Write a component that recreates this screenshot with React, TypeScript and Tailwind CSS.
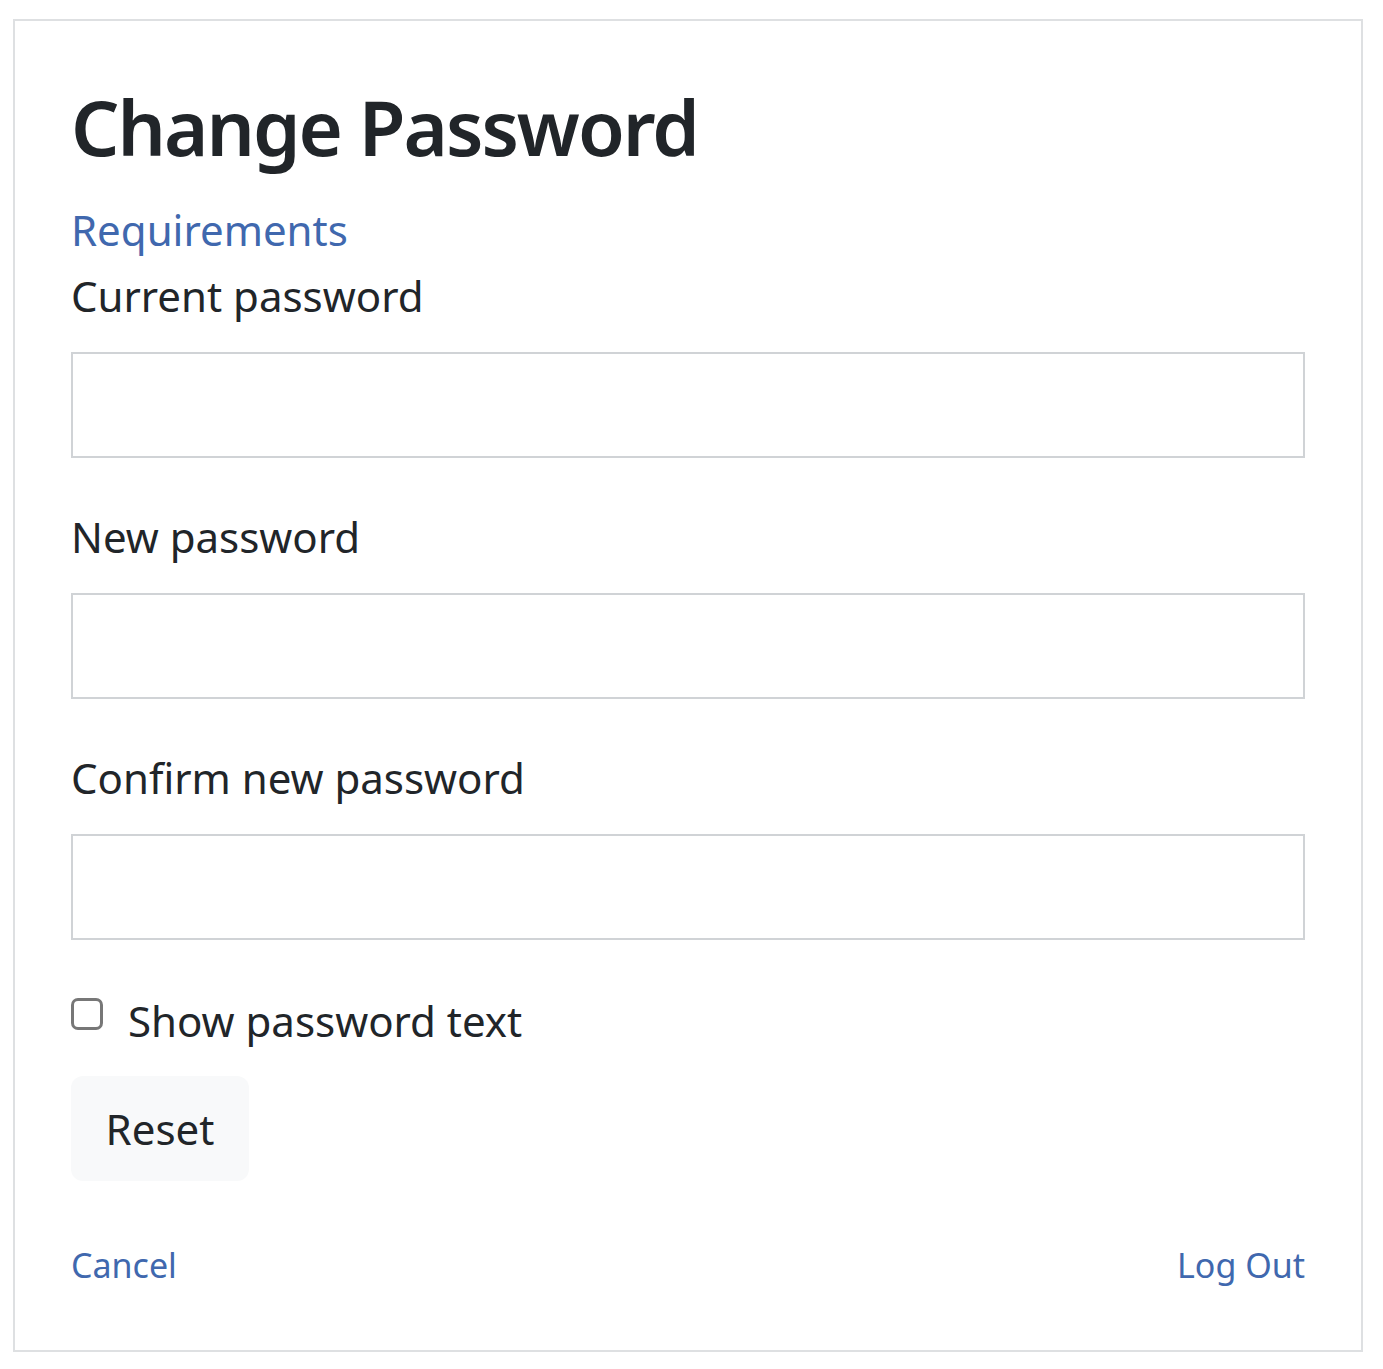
import React, { useState } from 'react';

const font = { fontFamily: '"Noto Sans", "Open Sans", sans-serif' };

function Field({ label, show }: { label: string; show: boolean }) {
  return (
    <div className="flex flex-col">
      <label className="text-[42px] leading-[66px] text-[#212529]">{label}</label>
      <input
        type={show ? 'text' : 'password'}
        className="mt-[23px] h-[106px] w-full border-2 border-[#d0d3d6] bg-white px-6 text-[42px] outline-none"
      />
    </div>
  );
}

export default function App() {
  const [show, setShow] = useState(false);

  return (
    <div className="min-h-[1369px] bg-white pl-[13px] pt-[19px]" style={font}>
      <div className="flex h-[1333px] w-[1350px] flex-col border-2 border-[#dee0e2] px-[56px] pt-[58px]">
        <h1 className="text-[76px] font-semibold leading-[96px] tracking-[-2px] text-[#212529]">
          Change Password
        </h1>
        <a href="#" className="mt-[22px] text-[42px] leading-[66px] text-[#4068ae]">
          Requirements
        </a>

        <div className="flex flex-col gap-[46px]">
          <Field label="Current password" show={show} />
          <Field label="New password" show={show} />
          <Field label="Confirm new password" show={show} />
        </div>

        {/* Show password toggle */}
        <label className="mt-[47px] flex h-[66px] cursor-pointer items-center gap-[25px] text-[42px] text-[#212529]">
          <input
            type="checkbox"
            checked={show}
            onChange={(e) => setShow(e.target.checked)}
            className="sr-only"
          />
          <span className="-mt-[12px] h-[32px] w-[32px] rounded-[7px] border-[3px] border-[#777]" />
          <span>Show password text</span>
        </label>

        <button className="mt-[23px] h-[105px] w-[178px] rounded-[12px] bg-[#f8f9fa] text-[42px] text-[#212529]">
          Reset
        </button>

        <div className="mt-[57px] flex items-center justify-between text-[34px] leading-[54px] text-[#4068ae]">
          <a href="#">Cancel</a>
          <a href="#">Log Out</a>
        </div>
      </div>
    </div>
  );
}
